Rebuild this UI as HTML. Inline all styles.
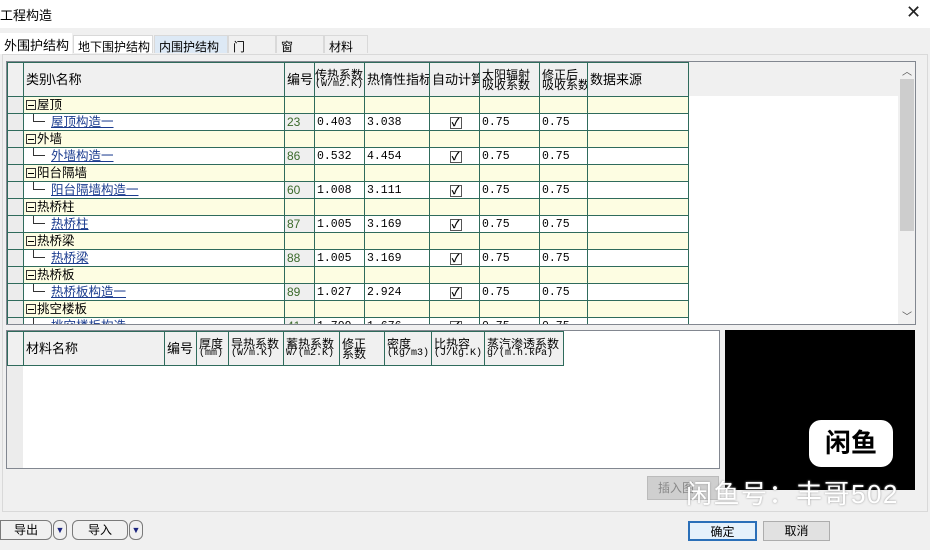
<!DOCTYPE html>
<html><head><meta charset="utf-8"><style>
*{box-sizing:border-box;margin:0;padding:0}
body{width:930px;height:550px;background:#f0f0f0;font-family:"Liberation Sans","Noto Sans CJK SC",sans-serif;font-size:12px;color:#000;position:relative;overflow:hidden}
.abs{position:absolute}
.title{left:0;top:0;width:930px;height:28px;background:#fff}
.tab{position:absolute;top:35px;height:18px;border:1px solid #d9d9d9;border-bottom:none;background:#f0f0f0;padding:2px 0 0 4px;font-size:12px}
table{border-collapse:collapse;table-layout:fixed}
td{border:1px solid #2f6b5c;height:17px;padding:0 0 0 2px;white-space:nowrap;overflow:hidden;font-size:12.5px;line-height:15px;vertical-align:bottom}
.g td{background:#fdfde2}
.g td.rh,.i td.rh{background:#ececec}
.i td{background:#fff}
.i td.num{background:#efefef;color:#3b6a2b;font-family:"Liberation Sans",sans-serif;font-size:12px}
.mono{font-family:"Liberation Mono","Noto Sans CJK SC",monospace;font-size:11.5px}
.hd td{background:#f0f0f0;vertical-align:middle;height:34px;line-height:11px;font-size:13px}
.lnk{color:#1b3c8f;text-decoration:underline;text-decoration-color:#1b3c8f}
.sm{font-size:12px;line-height:10px;display:block}
.box{display:inline-block;width:10px;height:10px;border:1px solid #333;margin-right:1px;vertical-align:-1px;position:relative}
.box:after{content:"";position:absolute;left:1px;top:4px;width:6px;height:1px;background:#000}
.tree{display:inline-block;width:12px;height:8px;border-left:1px solid #333;border-bottom:1px solid #333;margin:0 6px 0 7px;vertical-align:4px}
.chk{display:inline-block;width:12px;height:12px;border:1px solid #555;background:#fff;font-size:11px;line-height:10px;text-align:center;font-weight:bold}
.btn{position:absolute;border:1px solid #7a7a7a;background:#f0f0f0;text-align:center;font-size:12px;line-height:18px}
</style></head><body>
<div class="abs title"></div>
<div class="abs" style="left:0;top:5px;font-size:13px">工程构造</div>
<div class="abs" style="left:906px;top:2px;font-size:18px;font-weight:100;color:#222">✕</div>

<div class="tab" style="left:0;top:33px;height:21px;background:#fff;border:none;width:72px;font-size:13px">外围护结构</div>
<div class="tab" style="left:73px;width:80px;background:#fff">地下围护结构</div>
<div class="tab" style="left:154px;width:74px;background:#dde9f5">内围护结构</div>
<div class="tab" style="left:228px;width:48px">门</div>
<div class="tab" style="left:276px;width:48px">窗</div>
<div class="tab" style="left:324px;width:44px">材料</div>

<div class="abs" style="left:2px;top:54px;width:926px;height:458px;border:1px solid #d9d9d9;background:#f0f0f0"></div>

<div class="abs" style="left:6px;top:61px;width:910px;height:264px;border:1px solid #828790;background:#fff;overflow:hidden">
<div class="abs" style="left:0;top:0;width:892px;height:34px;background:#f0f0f0"></div>
<table style="position:absolute;left:0;top:0;width:681px">
<colgroup><col style="width:16px"><col style="width:261px"><col style="width:30px"><col style="width:50px"><col style="width:65px"><col style="width:50px"><col style="width:60px"><col style="width:48px"><col style="width:101px"></colgroup>
<tr class="hd"><td></td><td>类别\名称</td><td>编号</td><td style="padding:0"><span class="sm">传热系数</span><span class="sm mono" style="font-size:10px">(W/m2.K)</span></td><td>热惰性指标</td><td>自动计算</td><td><span class="sm">太阳辐射</span><span class="sm">吸收系数</span></td><td><span class="sm">修正后</span><span class="sm">吸收系数</span></td><td>数据来源</td></tr>
<tr class="g"><td class="rh"></td><td><span class="box"></span>屋顶</td><td></td><td></td><td></td><td></td><td></td><td></td><td></td></tr>
<tr class="i"><td class="rh"></td><td><span class="tree"></span><span class="lnk">屋顶构造一</span></td><td class="num">23</td><td class="mono">0.403</td><td class="mono">3.038</td><td style="text-align:center"><span class="chk">✓</span></td><td class="mono">0.75</td><td class="mono">0.75</td><td></td></tr>
<tr class="g"><td class="rh"></td><td><span class="box"></span>外墙</td><td></td><td></td><td></td><td></td><td></td><td></td><td></td></tr>
<tr class="i"><td class="rh"></td><td><span class="tree"></span><span class="lnk">外墙构造一</span></td><td class="num">86</td><td class="mono">0.532</td><td class="mono">4.454</td><td style="text-align:center"><span class="chk">✓</span></td><td class="mono">0.75</td><td class="mono">0.75</td><td></td></tr>
<tr class="g"><td class="rh"></td><td><span class="box"></span>阳台隔墙</td><td></td><td></td><td></td><td></td><td></td><td></td><td></td></tr>
<tr class="i"><td class="rh"></td><td><span class="tree"></span><span class="lnk">阳台隔墙构造一</span></td><td class="num">60</td><td class="mono">1.008</td><td class="mono">3.111</td><td style="text-align:center"><span class="chk">✓</span></td><td class="mono">0.75</td><td class="mono">0.75</td><td></td></tr>
<tr class="g"><td class="rh"></td><td><span class="box"></span>热桥柱</td><td></td><td></td><td></td><td></td><td></td><td></td><td></td></tr>
<tr class="i"><td class="rh"></td><td><span class="tree"></span><span class="lnk">热桥柱</span></td><td class="num">87</td><td class="mono">1.005</td><td class="mono">3.169</td><td style="text-align:center"><span class="chk">✓</span></td><td class="mono">0.75</td><td class="mono">0.75</td><td></td></tr>
<tr class="g"><td class="rh"></td><td><span class="box"></span>热桥梁</td><td></td><td></td><td></td><td></td><td></td><td></td><td></td></tr>
<tr class="i"><td class="rh"></td><td><span class="tree"></span><span class="lnk">热桥梁</span></td><td class="num">88</td><td class="mono">1.005</td><td class="mono">3.169</td><td style="text-align:center"><span class="chk">✓</span></td><td class="mono">0.75</td><td class="mono">0.75</td><td></td></tr>
<tr class="g"><td class="rh"></td><td><span class="box"></span>热桥板</td><td></td><td></td><td></td><td></td><td></td><td></td><td></td></tr>
<tr class="i"><td class="rh"></td><td><span class="tree"></span><span class="lnk">热桥板构造一</span></td><td class="num">89</td><td class="mono">1.027</td><td class="mono">2.924</td><td style="text-align:center"><span class="chk">✓</span></td><td class="mono">0.75</td><td class="mono">0.75</td><td></td></tr>
<tr class="g"><td class="rh"></td><td><span class="box"></span>挑空楼板</td><td></td><td></td><td></td><td></td><td></td><td></td><td></td></tr>
<tr class="i"><td class="rh"></td><td><span class="tree"></span><span class="lnk">挑空楼板构造</span></td><td class="num">41</td><td class="mono">1.709</td><td class="mono">1.676</td><td style="text-align:center"><span class="chk">✓</span></td><td class="mono">0.75</td><td class="mono">0.75</td><td></td></tr>
</table>
<div class="abs" style="left:891px;top:0;width:17px;height:262px;background:#f0f0f0"></div>
<div class="abs" style="left:893px;top:17px;width:14px;height:152px;background:#cdcdcd"></div>
<div class="abs" style="left:895px;top:1px;font-size:10px;color:#555">︿</div>
<div class="abs" style="left:895px;top:246px;font-size:10px;color:#555">﹀</div>
</div>

<div class="abs" style="left:6px;top:330px;width:714px;height:139px;border:1px solid #828790;background:#fff;overflow:hidden">
<div class="abs" style="left:0;top:0;width:16px;height:137px;background:#ececec"></div>
<table style="position:absolute;left:0;top:0;width:556px">
<colgroup><col style="width:16px"><col style="width:141px"><col style="width:32px"><col style="width:32px"><col style="width:55px"><col style="width:56px"><col style="width:45px"><col style="width:47px"><col style="width:53px"><col style="width:79px"></colgroup>
<tr class="hd"><td style="height:34px"></td><td>材料名称</td><td>编号</td><td><span class="sm">厚度</span><span class="sm mono" style="font-size:10px">(mm)</span></td><td><span class="sm">导热系数</span><span class="sm mono" style="font-size:10px">(W/m.K)</span></td><td><span class="sm">蓄热系数</span><span class="sm mono" style="font-size:10px">W/(m2.K)</span></td><td><span class="sm">修正</span><span class="sm">系数</span></td><td><span class="sm">密度</span><span class="sm mono" style="font-size:10px">(kg/m3)</span></td><td><span class="sm">比热容</span><span class="sm mono" style="font-size:10px">(J/kg.K)</span></td><td><span class="sm">蒸汽渗透系数</span><span class="sm mono" style="font-size:10px">g/(m.h.kPa)</span></td></tr>
</table>
</div>

<div class="abs" style="left:725px;top:330px;width:190px;height:160px;background:#000"></div>
<div class="abs" style="left:809px;top:420px;width:84px;height:47px;background:#fff;border-radius:12px;text-align:center;font-size:26px;line-height:47px;font-weight:bold;color:#000">闲鱼</div>
<div class="abs" style="left:647px;top:476px;width:72px;height:24px;background:#cfcfcf;border:1px solid #bbb;color:#888;font-size:12px;line-height:22px;padding-left:10px">插入图</div>
<div class="abs" style="left:686px;top:474px;font-size:26px;color:#fff;white-space:nowrap;text-shadow:0 0 2px #999;letter-spacing:1.5px">闲鱼号：丰哥502</div>

<div class="btn" style="left:0;top:520px;width:52px;height:20px;border-radius:0 6px 6px 0">导出</div>
<div class="btn" style="left:53px;top:520px;width:14px;height:20px;border-radius:6px;color:#1a237e;font-size:9px">▼</div>
<div class="btn" style="left:72px;top:520px;width:56px;height:20px;border-radius:6px">导入</div>
<div class="btn" style="left:129px;top:520px;width:14px;height:20px;border-radius:6px;color:#1a237e;font-size:9px">▼</div>
<div class="btn" style="left:688px;top:521px;width:69px;height:20px;border:2px solid #2a6fb8;background:#e5f1fb">确定</div>
<div class="btn" style="left:763px;top:521px;width:67px;height:20px;border-color:#adadad;background:#e1e1e1">取消</div>
</body></html>
